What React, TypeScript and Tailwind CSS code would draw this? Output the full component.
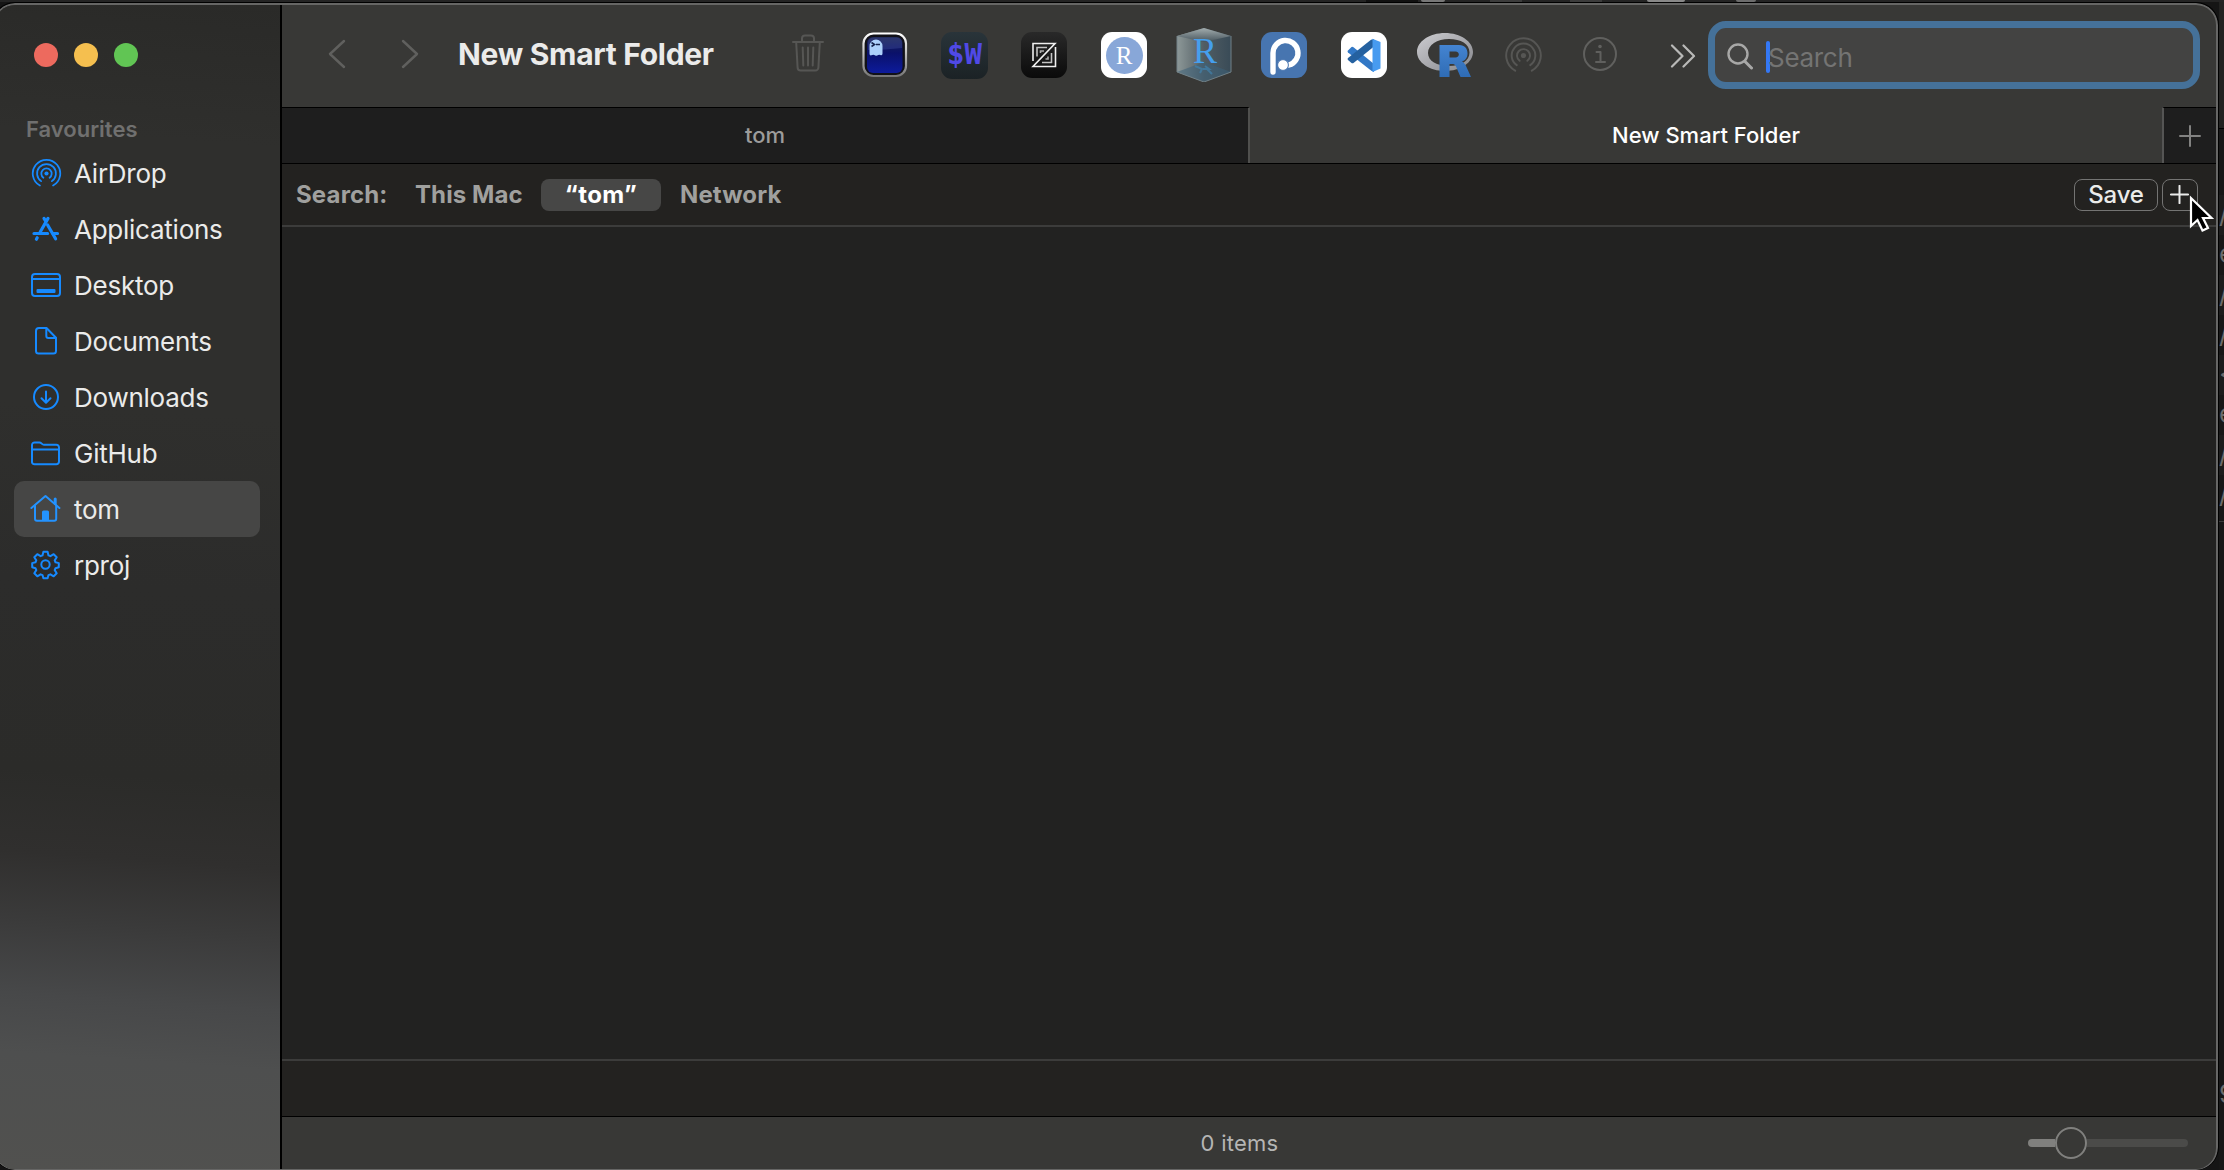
import type { ReactNode } from "react";

function AirDropIcon({ size, width, className = "" }: { size: number; width: number; className?: string }) {
  return (
    <svg width={size} height={size} viewBox="0 0 30 30" fill="none" stroke="currentColor" strokeWidth={width} strokeLinecap="round" className={className}>
      <circle cx="15" cy="15" r="2" fill="currentColor" stroke="none" />
      <path d="M12 19.1A5 5 0 1 1 18 19.1" />
      <path d="M9.8 22.4A9.1 9.1 0 1 1 20.2 22.4" />
      <path d="M8.6 26.7A13.3 13.3 0 1 1 21.4 26.7" />
    </svg>
  );
}

const line = { fill: "none", stroke: "currentColor", strokeWidth: 2, strokeLinecap: "round", strokeLinejoin: "round" } as const;

function Icon({ children }: { children: ReactNode }) {
  return (
    <svg width="32" height="32" viewBox="0 0 32 32" {...line}>
      {children}
    </svg>
  );
}

const places: { label: string; icon: ReactNode }[] = [
  { label: "AirDrop", icon: <AirDropIcon size={31} width={1.7} /> },
  {
    label: "Applications",
    icon: (
      <Icon>
        <g strokeWidth="3.2">
          <path d="M18 5.4L10.2 19" />
          <path d="M14 5.4L15.4 7.8" />
          <path d="M17.6 12L25.6 25.8" />
          <path d="M4 20.5H17.6M23 20.5H27.5" />
          <path d="M7.2 24.8L6.4 26.2" />
        </g>
      </Icon>
    ),
  },
  {
    label: "Desktop",
    icon: (
      <Icon>
        <rect x="2" y="5" width="28" height="22" rx="3" />
        <path d="M2 10H30" />
        <rect x="6.5" y="20" width="19" height="4" rx="1" fill="currentColor" stroke="none" />
      </Icon>
    ),
  },
  {
    label: "Documents",
    icon: (
      <Icon>
        <path d="M9 3H16.5L26 12.8V26a2.6 2.6 0 0 1-2.6 2.6H8.6A2.6 2.6 0 0 1 6 26V6A3 3 0 0 1 9 3Z" />
        <path d="M16.3 3.5V11a2 2 0 0 0 2 2H25.6" />
      </Icon>
    ),
  },
  {
    label: "Downloads",
    icon: (
      <Icon>
        <circle cx="16" cy="16" r="12" />
        <path d="M16 10.5V21.5M11.5 17.2L16 21.7L20.5 17.2" />
      </Icon>
    ),
  },
  {
    label: "GitHub",
    icon: (
      <Icon>
        <path d="M2 25.2V8A2.6 2.6 0 0 1 4.6 5.4H9.4C11.6 5.400 11.800 7.800 14 7.800H26.400A2.600 2.600 0 0 1 29 10.400V24.600a2.600 2.600 0 0 1-2.600 2.600H4.600A2.600 2.600 0 0 1 2 25.200Z" />
        <path d="M2 12.600H29" />
      </Icon>
    ),
  },
  {
    label: "tom",
    icon: (
      <Icon>
        <path d="M1.4 15L15.5 3L29.4 15" />
        <path d="M5 12.5V25.8A2 2 0 0 0 7 27.8H24.200A2 2 0 0 0 26.2 25.800V12.500" />
        <path d="M12 27.500V19A1.500 1.500 0 0 1 13.500 17.500H17.500A1.500 1.500 0 0 1 19 19V27.500Z" fill="currentColor" stroke="none" />
        <path d="M25.200 6V10.500" strokeWidth="3" />
      </Icon>
    ),
  },
  {
    label: "rproj",
    icon: (
      <Icon>
        <path d="M13.6 3h4.2l.9 3.7 1.9.8 3.3-2 3 3-2 3.200.8 1.900 3.300.8v4.200l-3.300.9-.8 1.900 2 3.200-3 3-3.300-2-1.900.8-.9 3.200h-4.200l-.9-3.200-1.900-.8-3.300 2-3-3 2-3.200-.8-1.900-3.300-.9v-4.200l3.300-.8.8-1.900-2-3.200 3-3 3.300 2 1.900-.8z" transform="translate(-.2 -.3)" />
        <circle cx="15.500" cy="15.500" r="4.200" />
      </Icon>
    ),
  },
];

function Sidebar() {
  return (
    <aside className="flex h-full w-[287px] shrink-0 flex-col border-r-2 border-black bg-linear-[184deg,#2a2a28_0%,#2f2f2d_12%,#2f2f2d_35%,#2c2c2b_50%,#2b2b29_66%,#302f2e_73%,#3b3b3b_79%,#474849_85%,#4e4f4f_90%,#51514f_100%] pl-[5px]">
      <div className="mt-[38px] ml-[34px] flex gap-4">
        <span className="size-6 rounded-full bg-[#ed6a5e]" />
        <span className="size-6 rounded-full bg-[#f5bf4f]" />
        <span className="size-6 rounded-full bg-[#61c554]" />
      </div>
      <h2 className="mt-[46px] ml-[26px] h-8 text-[22px] leading-[33px] font-semibold text-[#70706f]">Favourites</h2>
      <nav>
        {places.map((p) => (
          <div
            key={p.label}
            className={
              p.label === "tom"
                ? "mr-5 ml-3.5 flex h-14 items-center rounded-[10px] bg-[#464645] pl-4 text-[#2493ff]"
                : "mr-5 ml-3.5 flex h-14 items-center pl-4 text-[#168aff]"
            }
          >
            <span className="flex w-8 justify-center">{p.icon}</span>
            <span className="ml-3 text-[26px] tracking-[-0.25px] text-[#ebebea]">{p.label}</span>
          </div>
        ))}
      </nav>
    </aside>
  );
}

function Launchers() {
  return (
    <div className="flex items-center">
      <svg width="32" height="38" viewBox="0 0 32 38" {...line} className="-mt-1 text-[#565654]">
        <path d="M1 8H31M10 7.500V4.500A3 3 0 0 1 13 1.500H19A3 3 0 0 1 22 4.500V7.500M4.200 8.500L5.600 33.500A3 3 0 0 0 8.600 36.500H23.400A3 3 0 0 0 26.400 33.500L27.800 8.500M10.700 13.500L11.300 31.500M16 13.500V31.500M21.300 13.500L20.700 31.500" />
      </svg>
      <svg width="46" height="46" viewBox="0 0 46 46" className="ml-[38px]">
        <defs>
          <linearGradient id="rim" x1="0" y1="0" x2="0" y2="1">
            <stop stopColor="#fff" />
            <stop offset="1" stopColor="#777" />
          </linearGradient>
          <linearGradient id="screen" x1="0" y1="0" x2="0" y2="1">
            <stop stopColor="#1b2350" />
            <stop offset=".45" stopColor="#0a116a" />
            <stop offset="1" stopColor="#0d1b9c" />
          </linearGradient>
        </defs>
        <rect x="1.500" y="1.500" width="42.500" height="42.500" rx="10" fill="#111118" stroke="url(#rim)" strokeWidth="2.200" />
        <rect x="5" y="5" width="35.500" height="36" rx="6" fill="url(#screen)" />
        <path d="M6 11Q6 5.500 12 5.500H34Q40 5.500 40 11V16Q24 18 6 18Z" fill="#8aa0ff" opacity=".16" />
        <path d="M7.500 14A6.500 6.500 0 0 1 20.500 14V21.500Q20.500 24 18.300 23Q17.300 22.300 16.300 23Q14 24.300 12.300 23Q11.300 22.300 10.200 23Q7.500 24.300 7.500 21.500Z" fill="#acd0fa" />
        <path d="M9.500 10.500L12.500 12.500L9.500 14.500M14 12.500H18" fill="none" stroke="#16244e" strokeWidth="1.600" />
      </svg>
      <div className="ml-[33px] flex size-[47px] items-center justify-center rounded-[11px] bg-linear-to-b from-[#29343a] to-[#1b2225] font-[DejaVu_Sans_Mono,monospace] text-[29px] font-bold text-[#5049e6]">
        $W
      </div>
      <svg width="46" height="46" viewBox="0 0 46 46" className="ml-[33px]">
        <defs>
          <linearGradient id="dark" x1="0" y1="0" x2="0" y2="1">
            <stop stopColor="#292929" />
            <stop offset="1" stopColor="#0a0a0a" />
          </linearGradient>
        </defs>
        <rect width="46" height="46" rx="11" fill="url(#dark)" />
        <g fill="none" stroke="#efefef" strokeWidth="1.600">
          <path d="M12 29V11.500H34L12 34.500H34.500V15" />
          <path d="M16 24.500V15.500H26M30.500 21V30.500H21" stroke="#c4c4c4" />
          <path d="M19.500 21V19H23M27 24.500V27H24.500" stroke="#aaa" />
        </g>
      </svg>
      <div className="ml-[34px] flex size-[46px] items-center justify-center rounded-[11px] bg-white">
        <span className="flex size-[37px] items-center justify-center rounded-full bg-[#88a7d8] font-[Liberation_Serif,serif] text-[25px] leading-none text-white">R</span>
      </div>
      <svg width="56" height="54" viewBox="0 0 56 54" className="ml-[29px]">
        <defs>
          <linearGradient id="cubeL" x1="0" x2="1" y1="0" y2="0">
            <stop stopColor="#8d9898" />
            <stop offset=".5" stopColor="#515d63" />
            <stop offset="1" stopColor="#394b57" />
          </linearGradient>
          <linearGradient id="cubeT" x1="0" x2="0" y1="0" y2="1">
            <stop stopColor="#a3adae" />
            <stop offset="1" stopColor="#46545c" />
          </linearGradient>
        </defs>
        <path d="M28 0L55 8V44L28 54L1 44V8Z" fill="url(#cubeL)" />
        <path d="M28 0L55 8L28 14L1 8Z" fill="url(#cubeT)" />
        <path d="M28 34L55 44L28 54L1 44Z" fill="#3c6178" opacity=".55" />
        <path d="M1 8V44L28 54L55 44V8" fill="none" stroke="#718087" strokeWidth="1" />
        <text x="29" y="35" textAnchor="middle" fontSize="36" fill="#459fed" fontFamily="Liberation Serif">R</text>
        <path d="M19 38L26 41L24 45M27 41H33L29 38M31 41L36 46" stroke="#4182ad" strokeWidth="2" fill="none" opacity=".7" />
      </svg>
      <svg width="46" height="46" viewBox="0 0 46 46" className="ml-[29px]">
        <rect width="46" height="46" rx="11" fill="#4775b0" />
        <path d="M12 40V21A12.500 12.500 0 1 1 28 33" fill="none" stroke="#fff" strokeWidth="5.400" strokeLinecap="round" />
        <circle cx="22" cy="33" r="5.400" fill="#fff" stroke="#4775b0" strokeWidth="1" />
      </svg>
      <svg width="46" height="46" viewBox="0 0 46 46" className="ml-[34px]">
        <rect width="46" height="46" rx="11" fill="#fff" />
        <path d="M7 18.500L10.500 15Q11.500 14.500 12.500 15.200L33 32V40L30 38.500L7 20.500Q6 19.500 7 18.500Z" fill="#3278c6" />
        <path d="M7 28L10.500 31Q11.500 31.700 12.500 31L33 14.500V7L30 7.800L7 26Q6 27 7 28Z" fill="#2561a0" />
        <path d="M31.500 6.700L39.500 10V36.500L31.500 40Z" fill="#479bf0" />
      </svg>
      <svg width="57" height="46" viewBox="0 0 57 46" className="ml-[29px]">
        <defs>
          <linearGradient id="ring" x1="0" y1="0" x2="1" y2="1">
            <stop stopColor="#cdcdd1" />
            <stop offset="1" stopColor="#85868b" />
          </linearGradient>
          <linearGradient id="bigR" x1="0" y1="0" x2="0" y2="1">
            <stop stopColor="#4484d1" />
            <stop offset="1" stopColor="#2f6cb5" />
          </linearGradient>
        </defs>
        <path fillRule="evenodd" fill="url(#ring)" d="M29 1C44.500 1 57 9.500 57 20S44.500 39 29 39S1 30.500 1 20S13.500 1 29 1ZM33 7C21 7 12 13 12 21S21 34 33 34S53.500 29 53.500 20.500S45 7 33 7Z" />
        <path fillRule="evenodd" fill="url(#bigR)" d="M23.500 13H43C49 13 51.500 17 51.500 21.500C51.500 26 49 28.500 46 29.500C48 30.500 49 32 50 34L55 45H44.500L40 34.500C39 32.500 38 32 36 32H33.500V45H23.500ZM33.500 19.500V25.500H39.500C44 25.500 44 19.500 39.500 19.500Z" />
      </svg>
      <AirDropIcon size={39} width={1.5} className="ml-[31px] text-[#565654]" />
      <svg width="34" height="34" viewBox="0 0 34 34" {...line} className="-mt-0.5 ml-[40px] text-[#60605e]">
        <circle cx="17" cy="17" r="16" />
        <circle cx="17" cy="9.500" r="1.800" fill="currentColor" stroke="none" />
        <path d="M13.500 15H17.500V25M13 25H22" />
      </svg>
      <svg width="26" height="24" viewBox="0 0 26 24" {...line} strokeWidth="2.200" className="mt-0.5 ml-[53px] text-[#b9b9b8]">
        <path d="M2 1.500L12.500 12L2 22.500M13.500 1.500L24 12L13.500 22.500" />
      </svg>
    </div>
  );
}

function Toolbar() {
  return (
    <header className="flex h-[102px] shrink-0 items-start">
      <div className="flex h-[100px] flex-1 items-center">
        <svg width="18" height="30" viewBox="0 0 18 30" {...line} strokeWidth="2.400" className="-mt-0.5 ml-[46px] text-[#60605e]">
          <path d="M16 2L2 15L16 28" />
        </svg>
        <svg width="18" height="30" viewBox="0 0 18 30" {...line} strokeWidth="2.400" className="-mt-0.5 ml-[55px] text-[#60605e]">
          <path d="M2 2L16 15L2 28" />
        </svg>
        <h1 className="-mt-0.5 ml-[39px] w-[334px] text-[30px] leading-none font-bold tracking-[-0.3px] whitespace-nowrap text-[#ebebea]">New Smart Folder</h1>
        <Launchers />
      </div>
      <div className="mt-4 mr-4 flex h-[68px] w-[492px] shrink-0 items-center rounded-[18px] border-[7px] border-[#457199] bg-[#434342]">
        <svg width="26" height="28" viewBox="0 0 26 28" {...line} strokeWidth="2.400" className="mt-1 ml-3 text-[#a8a8a7]">
          <circle cx="11" cy="11" r="9.500" />
          <path d="M18 18.500L24.500 25" strokeWidth="3" />
        </svg>
        <span className="mt-1 ml-[13px] h-8 w-1 rounded-full bg-[#3478f6]" />
        <span className="-ml-0.5 pt-[5px] text-[26px] tracking-[-0.3px] text-[#747473]">Search</span>
      </div>
    </header>
  );
}

function Plus({ size, width }: { size: number; width: number }) {
  return (
    <svg width={size} height={size} viewBox="0 0 22 22" fill="none" stroke="currentColor" strokeWidth={width} strokeLinecap="round">
      <path d="M11 1V21M1 11H21" />
    </svg>
  );
}

function Tabs() {
  return (
    <div className="flex h-[57px] shrink-0 border-b border-black text-[22px] font-medium">
      <div className="flex w-[968px] items-center justify-center border-t border-r-2 border-t-black border-r-[#50504e] bg-[#1e1e1e] pb-px text-[#9c9c9b]">tom</div>
      <div className="flex flex-1 items-center justify-center text-white">New Smart Folder</div>
      <div className="flex w-[54px] items-center justify-center border-t border-l-2 border-t-black border-l-[#555554] bg-[#1e1e1e] text-[#828281]">
        <Plus size={22} width={2} />
      </div>
    </div>
  );
}

function SearchScope() {
  return (
    <div className="flex h-[63px] shrink-0 items-center border-b-2 border-[#3c3c3b] bg-[#232220] text-[24px] font-bold text-[#a0a09e]">
      <span className="ml-3.5 w-[119px] pt-px tracking-[0.15px]">Search:</span>
      <span className="w-[126px] tracking-[0.1px]">This Mac</span>
      <span className="flex h-8 w-[120px] items-center justify-center rounded-lg bg-[#474746] tracking-[0.4px] text-white">“tom”</span>
      <span className="ml-[19px] tracking-[0.1px]">Network</span>
      <button className="ml-auto flex h-8 w-[84px] items-center justify-center rounded-lg border-[1.500px] border-[#747473] font-medium tracking-[-0.2px] text-[#ebebea]">Save</button>
      <button className="mr-[18px] ml-1 flex h-8 w-9 items-center justify-center rounded-lg border-[1.500px] border-[#747473] pr-px text-[#ebebea]">
        <Plus size={19} width={2.300} />
      </button>
    </div>
  );
}

function StatusBar() {
  return (
    <footer className="grid h-[53px] shrink-0 grid-cols-[1fr_auto_1fr] items-center border-t border-black">
      <span />
      <span className="pr-[19px] text-[22px] tracking-[0.25px] text-[#b5b5b4]">0 items</span>
      <div className="mr-7 flex items-center justify-self-end">
        <span className="h-2 w-[27px] rounded-l-full bg-[#80807e]" />
        <span className="size-8 rounded-full border-2 border-[#80807e] bg-[#383836]" />
        <span className="h-2 w-[101px] rounded-r-full bg-[#4b4b49]" />
      </div>
    </footer>
  );
}

const codeColumn = ["/", "e", "/", "/", "<", "e", "/", "/"];

function BackWindowEdge() {
  return (
    <div className="flex w-[5px] flex-col overflow-hidden bg-[#171717] text-[26px] leading-[38px] text-[#6b6b6b]">
      <div className="h-[127px] shrink-0 border-b border-black bg-[#222221]" />
      <div className="h-[66px] shrink-0" />
      {codeColumn.map((glyph, i) => (
        <div key={i} className="h-10 shrink-0 odd:bg-[#1c1c1c]">
          {glyph}
        </div>
      ))}
      <div className="h-[7px] shrink-0 border-b border-[#3a3a3a]" />
      <div className="h-[553px] shrink-0" />
      <div className="h-10 shrink-0">9</div>
    </div>
  );
}

export default function App() {
  return (
    <div className="flex h-[1170px] w-[2224px] flex-col overflow-hidden bg-[#151515] font-[Inter,sans-serif]">
      <div className="flex h-[2px] shrink-0 bg-[#242424]">
        <span className="ml-[1366px] w-[52px] bg-[#111111]" />
        <span className="ml-[3px] w-6 rounded-b-xs bg-[#777777]" />
        <span className="ml-[45px] w-8 bg-[#3c3c3c]" />
        <span className="ml-[48px] w-8 bg-[#3c3c3c]" />
        <span className="ml-[45px] w-[38px] rounded-b-xs bg-[#888888]" />
        <span className="ml-[51px] w-5 rounded-b-xs bg-[#6c6c6c]" />
      </div>
      <div className="flex min-h-0 flex-1">
        <div className="-ml-2 flex h-[1168px] w-[2227px] shrink-0 overflow-hidden rounded-[23px] border border-b-0 border-black">
          <main className="flex w-full overflow-hidden rounded-[22px] border-2 border-b border-[#666665] bg-[#383836]">
            <Sidebar />
            <section className="relative flex min-w-0 flex-1 flex-col">
              <Toolbar />
              <Tabs />
              <SearchScope />
              <div className="flex-1 bg-[#222221]" />
              <div className="h-[57px] shrink-0 border-t-2 border-[#3c3c3b] bg-[#232220]" />
              <StatusBar />
              <svg width="28" height="42" viewBox="0 0 28 42" className="absolute top-[189px] right-0">
                <path d="M3 4V32L9.500 26L14.500 36.500L20 34L15 24H23.500Z" fill="#000" stroke="#fff" strokeWidth="2.200" strokeLinejoin="miter" />
              </svg>
            </section>
          </main>
        </div>
        <BackWindowEdge />
      </div>
    </div>
  );
}
